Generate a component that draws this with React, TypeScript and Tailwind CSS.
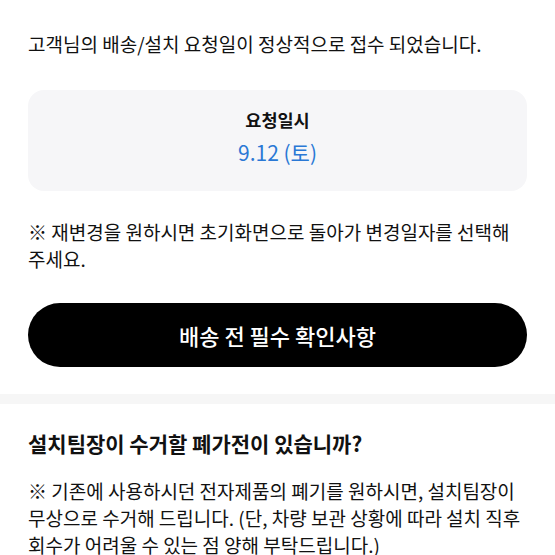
const font = { fontFamily: '"Noto Sans CJK KR", "Noto Sans", sans-serif' };

export default function App() {
  return (
    <div className="min-h-screen bg-white text-[#111]" style={font}>
      <section className="px-7 pt-[30px] pb-[27px]">
        <p className="text-[19px] leading-[28px]">
          고객님의 배송/설치 요청일이 정상적으로 접수 되었습니다.
        </p>

        <div className="mt-[32px] h-[101px] pb-[8px] rounded-[16px] bg-[#f6f6f8] flex flex-col items-center justify-center">
          <div className="text-[17.5px] font-bold leading-[24px]">요청일시</div>
          <div className="mt-[6px] text-[21px] leading-[28px] text-[#2a78d5]">9.12 (토)</div>
        </div>

        <p className="mt-[27px] text-[19px] leading-[27px]">
          ※ 재변경을 원하시면 초기화면으로 돌아가 변경일자를 선택해 주세요.
        </p>

        <button className="mt-[31px] w-full h-[64px] rounded-full bg-black text-white text-[22px] font-medium">
          배송 전 필수 확인사항
        </button>
      </section>

      <div className="h-[10px] bg-[#f6f6f6]" />

      <section className="px-7 pt-[24px]">
        <h2 className="text-[21px] leading-[30px] font-bold">
          설치팀장이 수거할 폐가전이 있습니까?
        </h2>
        <p className="mt-[19px] text-[19px] leading-[27px]">
          ※ 기존에 사용하시던 전자제품의 폐기를 원하시면, 설치팀장이 무상으로 수거해 드립니다. (단, 차량 보관 상황에 따라 설치 직후 회수가 어려울 수 있는 점 양해 부탁드립니다.)
        </p>
      </section>
    </div>
  );
}
